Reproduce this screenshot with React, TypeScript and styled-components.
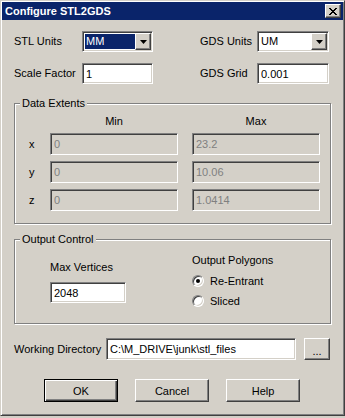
import React from 'react'
import styled, { createGlobalStyle, css } from 'styled-components'

const face = '#d4d0c8'
const shadow = '#808080'
const darkShadow = '#404040'
const highlight = '#ffffff'
const navy = '#0a246a'

const GlobalStyle = createGlobalStyle`
  html, body {
    margin:0;
    padding:0;
    background:${face};
  }
  body {
    font-family:"Liberation Sans", Arial, sans-serif;
    font-size:11px;
    color:#000;
  }
  * {
    box-sizing:border-box;
  }
`

const sunken = css`
  border:1px solid;
  border-color:${shadow} ${highlight} ${highlight} ${shadow};
  box-shadow:inset 1px 1px ${darkShadow}, inset -1px -1px ${face};
`

const raised = css`
  border:1px solid;
  border-color:${highlight} ${darkShadow} ${darkShadow} ${highlight};
  box-shadow:inset -1px -1px ${shadow};
`

const Window = styled.div`
  width:345px;
  height:416px;
  overflow:hidden;
  display:flex;
  flex-direction:column;
  padding:1px;
  background:${face};
  border:1px solid;
  border-color:${face} ${darkShadow} ${darkShadow} ${face};
  box-shadow:inset 1px 1px ${highlight}, inset -1px -1px ${shadow};
`

const TitleBar = styled.div`
  height:18px;
  flex:none;
  display:flex;
  align-items:center;
  justify-content:space-between;
  padding:0 2px 0 3px;
  background:${navy};
`

const TitleText = styled.span`
  color:#fff;
  font-weight:bold;
  font-size:11px;
  line-height:13px;
  white-space:nowrap;
`

const CloseButton = styled.button`
  ${raised}
  width:16px;
  height:14px;
  padding:0 1px 0 0;
  margin:0;
  background:${face};
  display:flex;
  align-items:center;
  justify-content:center;
`

const Body = styled.div`
  display:flex;
  flex-direction:column;
  padding:0 12px;
`

const SettingsGrid = styled.div`
  display:grid;
  grid-template-columns:68px 71px 47px 57px 72px;
  grid-auto-rows:21px;
  row-gap:11px;
  align-items:center;
  margin-top:11px;
`

const FieldLabel = styled.span`
  line-height:13px;
  white-space:nowrap;
`

const RightLabel = styled(FieldLabel)`
  grid-column-start:4;
`

const TextField = styled.input<{ $w: number; $h?: number }>`
  ${sunken}
  width:${p => p.$w}px;
  height:${p => p.$h ?? 21}px;
  margin:0;
  padding:0 0 0 3px;
  font:inherit;
  font-size:11px;
  color:#000;
  background:#fff;
  outline:none;
  border-radius:0;

  &:disabled {
    background:${face};
    color:${shadow};
    -webkit-text-fill-color:${shadow};
    opacity:1;
  }
`

const ComboFrame = styled.div<{ $w: number }>`
  ${sunken}
  width:${p => p.$w}px;
  height:21px;
  padding:1px;
  display:flex;
  background:#fff;
`

const ComboValue = styled.span<{ $selected: boolean }>`
  flex:1;
  margin:1px 0 1px 1px;
  padding-left:1px;
  display:flex;
  align-items:center;
  line-height:13px;
  color:${p => (p.$selected ? '#fff' : '#000')};
  background:${p => (p.$selected ? navy : 'transparent')};
`

const DropButton = styled.span`
  ${raised}
  width:16px;
  height:17px;
  flex:none;
  display:flex;
  align-items:center;
  justify-content:center;
  background:${face};
`

const GroupBox = styled.fieldset<{ $top: number; $padTop: number }>`
  margin:${p => p.$top}px 0 0 0;
  padding:${p => p.$padTop}px 0 12px 0;
  min-width:0;
  border:1px solid ${shadow};
  box-shadow:inset 1px 1px ${highlight}, 1px 1px ${highlight};
`

const GroupTitle = styled.legend`
  margin-left:5px;
  padding:0 2px;
  font-size:11px;
  line-height:13px;
  background:${face};
`

const ExtentsGrid = styled.div`
  display:grid;
  grid-template-columns:7px 128px 128px;
  grid-template-rows:12px repeat(3, 22px);
  column-gap:14px;
  row-gap:6px;
  align-items:center;
  padding-left:14px;
`

const ColumnHeader = styled.span<{ $col: number }>`
  grid-column-start:${p => p.$col};
  justify-self:center;
  line-height:13px;
`

const AxisLabel = styled.span`
  line-height:13px;
`

const OutputGrid = styled.div`
  display:grid;
  grid-template-columns:142px 1fr;
  align-items:start;
  padding-left:35px;
`

const VerticesColumn = styled.div`
  display:flex;
  flex-direction:column;
  align-items:flex-start;
  gap:8px;
  padding-top:7px;
`

const PolygonColumn = styled.div`
  display:flex;
  flex-direction:column;
  gap:4px;
`

const RadioList = styled.div`
  display:flex;
  flex-direction:column;
`

const RadioRow = styled.label`
  display:flex;
  align-items:center;
  gap:6px;
  height:20px;
  line-height:13px;
`

const RadioCircle = styled.span<{ $checked: boolean }>`
  width:12px;
  height:12px;
  flex:none;
  border-radius:50%;
  border:1px solid;
  border-color:${shadow} ${highlight} ${highlight} ${shadow};
  box-shadow:inset 1px 1px ${darkShadow}, inset -1px -1px ${face};
  background:#fff;
  display:flex;
  align-items:center;
  justify-content:center;

  &::after {
    content:"";
    width:4px;
    height:4px;
    border-radius:50%;
    background:#000;
    display:${p => (p.$checked ? 'block' : 'none')};
  }
`

const DirectoryRow = styled.div`
  display:flex;
  align-items:center;
  margin-top:14px;
`

const DirectoryLabel = styled.span`
  width:92px;
  line-height:13px;
  white-space:nowrap;
`

const PushButton = styled.button<{ $w: number; $h: number; $default?: boolean }>`
  ${raised}
  width:${p => p.$w}px;
  height:${p => p.$h}px;
  margin:0;
  padding:0;
  font:inherit;
  font-size:11px;
  color:#000;
  background:${face};
  border-radius:0;

  ${p =>
    p.$default &&
    css`
      border:1px solid #000;
      box-shadow:inset 1px 1px ${highlight}, inset -1px -1px ${darkShadow}, inset -2px -2px ${shadow};
    `}
`

const BrowseButton = styled(PushButton)`
  margin-left:8px;
  padding-top:3px;
`

const ButtonRow = styled.div`
  display:flex;
  gap:17px;
  margin-top:19px;
  padding-left:30px;
`

const extents = [
  { axis: 'x', min: '0', max: '23.2' },
  { axis: 'y', min: '0', max: '10.06' },
  { axis: 'z', min: '0', max: '1.0414' },
]

const ComboBox = ({ width, value, selected = false }: { width: number; value: string; selected?: boolean }) => (
  <ComboFrame $w={width}>
    <ComboValue $selected={selected}>{value}</ComboValue>
    <DropButton>
      <svg width="7" height="4" viewBox="0 0 7 4">
        <path d="M0 0h7L3.5 4z" fill="#000" />
      </svg>
    </DropButton>
  </ComboFrame>
)

const Radio = ({ label, checked = false }: { label: string; checked?: boolean }) => (
  <RadioRow>
    <RadioCircle $checked={checked} />
    {label}
  </RadioRow>
)

const App = () => {
  return (
    <>
      <GlobalStyle />
      <Window>
        <TitleBar>
          <TitleText>Configure STL2GDS</TitleText>
          <CloseButton aria-label="Close">
            <svg width="8" height="7" viewBox="0 0 8 7" shapeRendering="crispEdges">
              <path
                d="M0 0h2v1H0zM6 0h2v1H6zM1 1h2v1H1zM5 1h2v1H5zM2 2h4v1H2zM3 3h2v1H3zM2 4h4v1H2zM1 5h2v1H1zM5 5h2v1H5zM0 6h2v1H0zM6 6h2v1H6z"
                fill="#000"
              />
            </svg>
          </CloseButton>
        </TitleBar>
        <Body>
          <SettingsGrid>
            <FieldLabel>STL Units</FieldLabel>
            <ComboBox width={71} value="MM" selected />
            <RightLabel>GDS Units</RightLabel>
            <ComboBox width={72} value="UM" />
            <FieldLabel>Scale Factor</FieldLabel>
            <TextField $w={71} defaultValue="1" />
            <RightLabel>GDS Grid</RightLabel>
            <TextField $w={72} defaultValue="0.001" />
          </SettingsGrid>

          <GroupBox $top={13} $padTop={5}>
            <GroupTitle>Data Extents</GroupTitle>
            <ExtentsGrid>
              <ColumnHeader $col={2}>Min</ColumnHeader>
              <ColumnHeader $col={3}>Max</ColumnHeader>
              {extents.map(row => (
                <React.Fragment key={row.axis}>
                  <AxisLabel>{row.axis}</AxisLabel>
                  <TextField $w={128} $h={22} defaultValue={row.min} disabled />
                  <TextField $w={128} $h={22} defaultValue={row.max} disabled />
                </React.Fragment>
              ))}
            </ExtentsGrid>
          </GroupBox>

          <GroupBox $top={9} $padTop={8}>
            <GroupTitle>Output Control</GroupTitle>
            <OutputGrid>
              <VerticesColumn>
                <FieldLabel>Max Vertices</FieldLabel>
                <TextField $w={76} defaultValue="2048" />
              </VerticesColumn>
              <PolygonColumn>
                <FieldLabel>Output Polygons</FieldLabel>
                <RadioList>
                  <Radio label="Re-Entrant" checked />
                  <Radio label="Sliced" />
                </RadioList>
              </PolygonColumn>
            </OutputGrid>
          </GroupBox>

          <DirectoryRow>
            <DirectoryLabel>Working Directory</DirectoryLabel>
            <TextField $w={190} $h={22} defaultValue={'C:\\M_DRIVE\\junk\\stl_files'} />
            <BrowseButton $w={26} $h={22}>...</BrowseButton>
          </DirectoryRow>

          <ButtonRow>
            <PushButton $w={74} $h={23} $default>OK</PushButton>
            <PushButton $w={74} $h={23}>Cancel</PushButton>
            <PushButton $w={74} $h={23}>Help</PushButton>
          </ButtonRow>
        </Body>
      </Window>
    </>
  )
}

export default App
